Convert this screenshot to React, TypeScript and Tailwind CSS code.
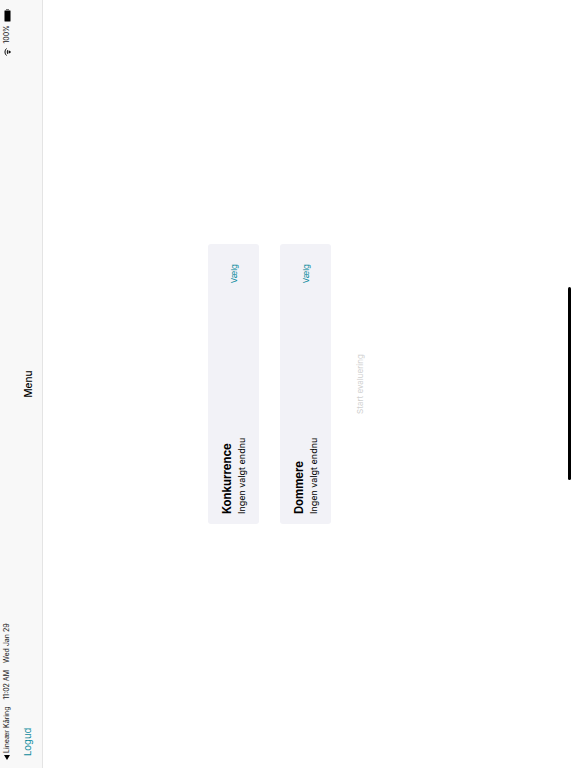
import React from 'react'

const font = { fontFamily: 'Inter, "Liberation Sans", Arial, sans-serif' }

const Card = ({ title }: { title: string }) => {
    return (
        <div className='w-[280px] h-[51px] bg-[#f2f2f7] rounded-[3px] flex items-center justify-between pl-[10px] pr-[20px]'>
            <div className='flex flex-col'>
                <span className='text-[11.2px] leading-[15px] font-bold text-black'>{title}</span>
                <span className='text-[9px] leading-[13px] text-black'>Ingen valgt endnu</span>
            </div>
            <span className='text-[8px] text-[#0b8a9c]'>Vælg</span>
        </div>
    )
}

const App = () => {
    return (
        <div className='w-[576px] h-[768px] overflow-hidden bg-white'>
            <div style={font} className='w-[768px] h-[576px] origin-top-left translate-y-[768px] -rotate-90 flex flex-col bg-white'>
                <div className='h-[43px] shrink-0 bg-[#f8f8f8] border-b border-[#e4e4e4] flex flex-col'>
                    <div className='h-[14px] flex items-center justify-between pl-[8px] pr-[9px] text-[7px] text-[#222]'>
                        <div className='flex items-center gap-[7px]'>
                            <div className='flex items-center gap-[2px]'>
                                <svg width="5" height="6" viewBox="0 0 5 6" fill="black">
                                    <path d="M0 3 L5 0 L5 6 Z" />
                                </svg>
                                <span>Lineær Kåring</span>
                            </div>
                            <span>11:02 AM</span>
                            <span>Wed Jan 29</span>
                        </div>
                        <div className='flex items-center gap-[3px]'>
                            <svg className='mr-[1px]' width="8" height="7" viewBox="0 0 16 14" fill="none" stroke="black" strokeWidth="2">
                                <path d="M1 5 C5 1 11 1 15 5" />
                                <path d="M4 8 C6.5 6 9.5 6 12 8" />
                                <path d="M8 13 L6 10.5 C7 9.8 9 9.8 10 10.5 Z" fill="black" />
                            </svg>
                            <span>100%</span>
                            <div className='flex items-center'>
                                <div className='w-[12px] h-[7px] bg-black rounded-[1.5px] border border-[#777]' />
                                <div className='w-[1px] h-[3px] bg-[#777]' />
                            </div>
                        </div>
                    </div>
                    <div className='flex-1 grid grid-cols-3 items-center pl-[12px] pr-[12px] pt-[1px]'>
                        <span className='text-[9.5px] text-[#0b8a9c]'>Logud</span>
                        <span className='text-[10px] font-medium text-black text-center'>Menu</span>
                    </div>
                </div>

                <div className='flex-1 flex flex-col items-center pt-[165px]'>
                    <div className='flex flex-col gap-[21px]'>
                        <Card title="Konkurrence" />
                        <Card title="Dommere" />
                    </div>
                    <span className='mt-[23px] text-[8px] text-[#d0d0d0]'>Start evaluering</span>
                    <div className='mt-auto mb-[5px] w-[193px] h-[3px] bg-black rounded-full' />
                </div>
            </div>
        </div>
    )
}

export default App
